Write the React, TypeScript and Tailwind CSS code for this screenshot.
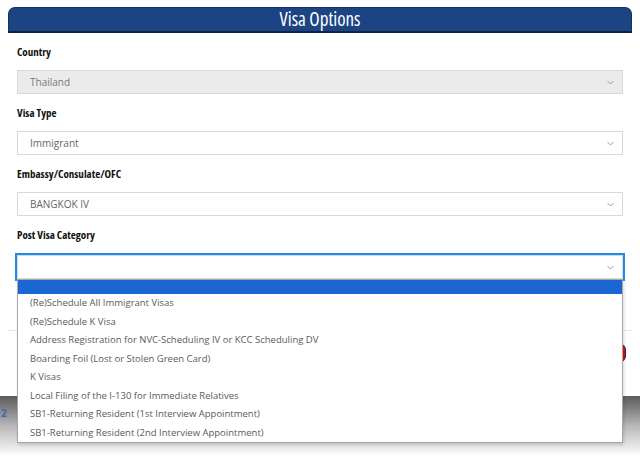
import React from 'react';

const font = { fontFamily: '"Open Sans", "Liberation Sans", Arial, sans-serif' };

const options = [
  '(Re)Schedule All Immigrant Visas',
  '(Re)Schedule K Visa',
  'Address Registration for NVC-Scheduling IV or KCC Scheduling DV',
  'Boarding Foil (Lost or Stolen Green Card)',
  'K Visas',
  'Local Filing of the I-130 for Immediate Relatives',
  'SB1-Returning Resident (1st Interview Appointment)',
  'SB1-Returning Resident (2nd Interview Appointment)',
];

const Chevron = () => (
  <svg width="7" height="5" viewBox="0 0 7 5" className="shrink-0">
    <polyline points="0.5,1 3.5,4 6.5,1" fill="none" stroke="#9a9a9a" strokeWidth="1" />
  </svg>
);

interface FieldProps {
  label: string;
  value: string;
  disabled?: boolean;
}

const Field: React.FC<FieldProps> = ({ label, value, disabled }) => (
  <div className="mb-[11px]">
    <div className="h-4 mb-2.5 text-[11px] font-bold leading-4 text-[#111] font-stretch-condensed">{label}</div>
    <div
      className={
        disabled
          ? 'h-6 flex items-center justify-between pl-3 pr-2 border border-[#d9d9d9] bg-[#ebebeb] text-[10px] text-[#7a7a7a]'
          : 'h-6 flex items-center justify-between pl-3 pr-2 border border-[#d9d9d9] bg-white text-[10px] text-[#666]'
      }
    >
      <span>{value}</span>
      <Chevron />
    </div>
  </div>
);

export default function App() {
  return (
    <div className="relative w-[640px] h-[457px] overflow-hidden bg-white" style={font}>
      <div className="mx-2 pt-[7px]">
        <div className="h-[26px] flex items-center justify-center rounded-t-[7px] border border-[#15325f] border-b-2 border-b-[#0e2448] bg-[#1c4482] text-[19px] leading-none text-white font-stretch-condensed">
          Visa Options
        </div>

        <div className="px-[9px] pt-[11px]">
          <Field label="Country" value="Thailand" disabled />
          <Field label="Visa Type" value="Immigrant" />
          <Field label="Embassy/Consulate/OFC" value="BANGKOK IV" />

          <div className="h-4 mb-3 text-[11px] font-bold leading-4 text-[#111] font-stretch-condensed">Post Visa Category</div>
          <div className="relative">
            <div className="h-6 flex items-center justify-end pr-2 border border-[#d9d9d9] bg-white outline-2 outline-[#1e8cf5]">
              <Chevron />
            </div>
            <div className="absolute z-10 top-full left-0 right-0 border border-[#a8a8a8] bg-white shadow-[1px_2px_3px_rgba(0,0,0,0.15)]">
              <div className="h-[14px] bg-[#1a66d2]" />
              {options.map((o) => (
                <div key={o} className="h-[18.5px] flex items-center pl-3 text-[9.5px] text-[#5a5a5a]">
                  {o}
                </div>
              ))}
            </div>
          </div>
        </div>

        <div className="mt-[51px] h-px bg-[#e6e6e6]" />
        <div className="mt-3 flex justify-end pr-[6px]">
          <div className="w-[90px] h-5 rounded-[7px] border border-[#1b2f55] bg-[#ff0000]" />
        </div>
      </div>

      <div className="mt-[33px] h-[60px] bg-gradient-to-b from-[#5c5c5c] via-[#b8b8b8] to-white pl-[1px] pt-[3px]">
        <span className="text-[10px] font-bold text-[#2f6fb5]">2</span>
      </div>
    </div>
  );
}
